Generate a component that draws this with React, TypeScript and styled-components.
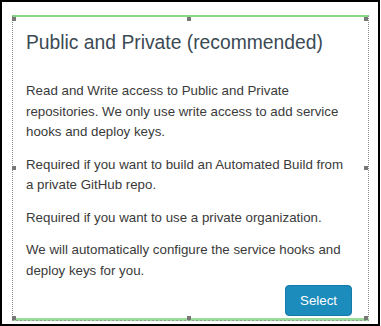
import React from "react";
import styled, { createGlobalStyle, css } from "styled-components";

const GlobalStyle = createGlobalStyle`
  html, body { margin: 0; padding: 0; background: #fff; }
  body { font-family: "Liberation Sans", Arial, sans-serif; }
  * { box-sizing: border-box; }
`;

const Frame = styled.div`
  width: 380px;
  height: 326px;
  border: 2px solid #000;
  background: #fff;
  padding: 13px 0 0 10px;
`;

const Card = styled.section`
  position: relative;
  width: 357px;
  height: 306px;
  border-top: 2px solid #86d886;
  border-left: 1px dotted #8a8a8a;
  border-right: 1px dotted #8a8a8a;
  padding: 15px 16px 5px 13px;
  display: flex;
  flex-direction: column;

  &::after {
    content: "";
    position: absolute;
    left: -1px;
    right: -1px;
    bottom: 0;
    height: 3px;
    background:
      repeating-linear-gradient(90deg, #9a9a9a 0 2px, transparent 2px 4px) bottom / 100% 1px no-repeat,
      #9bdc9b;
  }
`;

type HX = "left" | "center" | "right";
type HY = "top" | "middle" | "bottom";

const Handle = styled.span<{ $x: HX; $y: HY }>`
  position: absolute;
  width: 4px;
  height: 4px;
  background: #777;
  z-index: 2;
  ${({ $x }) =>
    $x === "left"
      ? css`left: -1px;`
      : $x === "right"
      ? css`right: 0;`
      : css`left: 174px;`}
  ${({ $y }) =>
    $y === "top"
      ? css`top: 0;`
      : $y === "bottom"
      ? css`bottom: 1px;`
      : css`top: 149px;`}
`;

const Title = styled.h2`
  margin: 0 0 27px;
  font-size: 19.3px;
  line-height: 22px;
  font-weight: normal;
  color: #3b4a54;
  white-space: nowrap;
`;

const Text = styled.p`
  margin: 0 0 12px;
  font-size: 13.3px;
  line-height: 20.5px;
  color: #3a3a3a;

  &:last-of-type {
    margin-bottom: 0;
  }
`;

const Footer = styled.div`
  margin-top: auto;
  display: flex;
  justify-content: flex-end;
`;

const Button = styled.button`
  width: 67px;
  height: 31px;
  border: 1px solid #167aa6;
  border-radius: 4px;
  background: #1b8cbc;
  color: #fff;
  font-family: "Liberation Sans", Arial, sans-serif;
  font-size: 13.3px;
  padding: 0;
  cursor: pointer;
`;

const handles: [HX, HY][] = [
  ["left", "top"],
  ["center", "top"],
  ["right", "top"],
  ["left", "middle"],
  ["right", "middle"],
  ["left", "bottom"],
  ["center", "bottom"],
  ["right", "bottom"],
];

export default function App() {
  return (
    <>
      <GlobalStyle />
      <Frame>
        <Card>
          {handles.map(([x, y]) => (
            <Handle key={`${x}-${y}`} $x={x} $y={y} />
          ))}
          <Title>Public and Private (recommended)</Title>
          <Text>
            Read and Write access to Public and Private repositories. We only use write access to add service
            hooks and deploy keys.
          </Text>
          <Text>Required if you want to build an Automated Build from a private GitHub repo.</Text>
          <Text>Required if you want to use a private organization.</Text>
          <Text>We will automatically configure the service hooks and deploy keys for you.</Text>
          <Footer>
            <Button>Select</Button>
          </Footer>
        </Card>
      </Frame>
    </>
  );
}
